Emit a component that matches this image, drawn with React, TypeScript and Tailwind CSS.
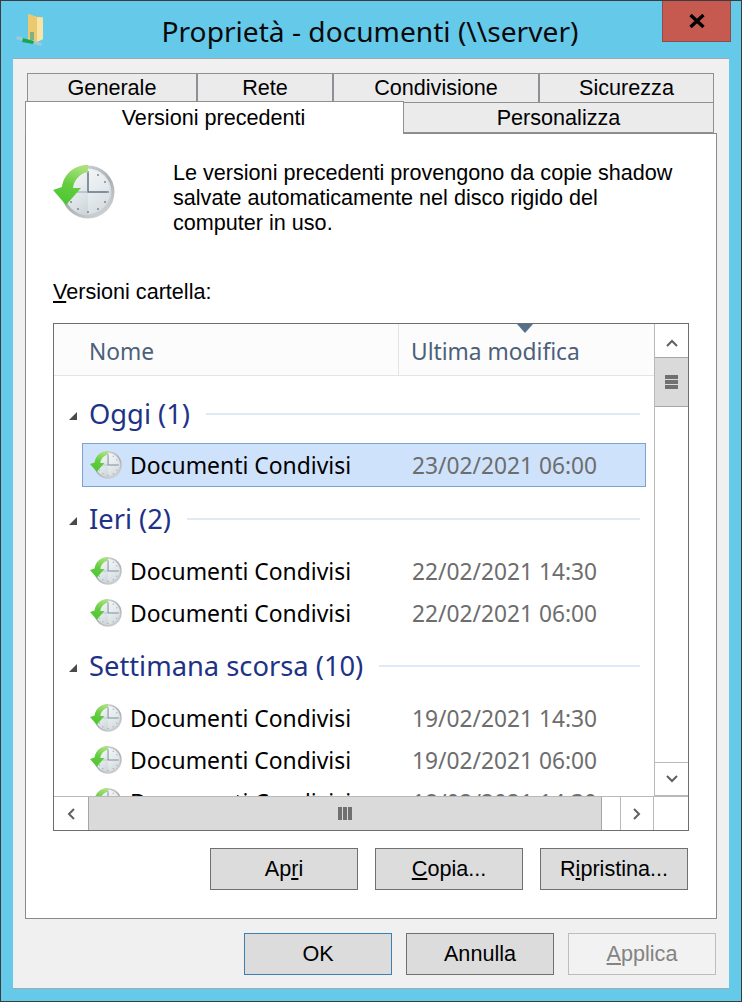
import React from "react";

// Clock with the green "restore" arrow, used big in the intro and small in the rows
function ShadowCopyIcon({ className, id }: { className: string; id: string }) {
  return (
    <svg className={className} viewBox="0 0 62 54" aria-hidden="true">
      <defs>
        <linearGradient id={`${id}-face`} x1="0.2" y1="0.1" x2="0.8" y2="0.9">
          <stop offset="0" stopColor="#f2f5f6" />
          <stop offset="0.55" stopColor="#dce3e6" />
          <stop offset="1" stopColor="#c6ced3" />
        </linearGradient>
        <linearGradient id={`${id}-rim`} x1="0.2" y1="0" x2="0.8" y2="1">
          <stop offset="0" stopColor="#d6d8da" />
          <stop offset="0.5" stopColor="#a9adb1" />
          <stop offset="1" stopColor="#d3d5d7" />
        </linearGradient>
        <linearGradient id={`${id}-arrow`} x1="0.6" y1="0" x2="0.3" y2="1">
          <stop offset="0" stopColor="#a9e07c" />
          <stop offset="0.5" stopColor="#62cd3f" />
          <stop offset="1" stopColor="#4cc52f" />
        </linearGradient>
      </defs>
      <circle cx="35" cy="27" r="26.5" fill={`url(#${id}-rim)`} />
      <circle cx="35" cy="27" r="23.5" fill={`url(#${id}-face)`} />
      <path d="M35 5a22 22 0 0 1 0 44z" fill="#fff" opacity="0.3" />
      {[[35, 7], [45, 10], [52, 17], [55, 27], [52, 37], [45, 44], [35, 47], [25, 44], [18, 37]].map(([x, y]) => (
        <rect key={`${x}-${y}`} x={x - 0.8} y={y - 0.8} width="1.6" height="1.6" fill="#6b7a86" />
      ))}
      <path d="M35 8v19h19" fill="none" stroke="#5d7389" strokeWidth="1.5" />
      <path d="M22 27h13" fill="none" stroke="#9aa7b1" strokeWidth="1" />
      <path d="M35 0C22 0 11 8 9 22L0 25l13 15 15-17h-8c1-8 7-15 15-16z" fill={`url(#${id}-arrow)`} />
    </svg>
  );
}

function FolderNetworkIcon() {
  return (
    <svg className="w-[28px] h-[32px] shrink-0" viewBox="0 0 28 32" aria-hidden="true">
      <path d="M12 0l9 3h6v22l-7 3H12z" fill="#f3d98c" />
      <path d="M12 0l9 3v25l-9-4z" fill="#ecc96f" />
      <path d="M21 3l6 2v20l-6 3z" fill="#f8e5a6" />
      <path d="M1 22l25 7-1 3L0 25z" fill="#a9c9d2" opacity="0.85" />
      <path d="M7 24l11 3-1 3-11-2z" fill="#17a84f" />
      <path d="M14 18h4v8h-4z" fill="#7fb08a" />
    </svg>
  );
}

function Triangle() {
  return (
    <svg className="w-[8px] h-[8px] shrink-0" viewBox="0 0 8 8" aria-hidden="true">
      <path d="M8 0v8H0z" fill="#4a4a4a" />
    </svg>
  );
}

function Chevron({ d }: { d: string }) {
  return (
    <svg className="w-[14px] h-[14px]" viewBox="0 0 14 14" aria-hidden="true">
      <path d={d} fill="none" stroke="#606060" strokeWidth="2" />
    </svg>
  );
}

type Row = { date: string; selected?: boolean };

function GroupHeading({ title }: { title: string }) {
  return (
    <div className="h-[42px] flex items-center pl-[15px] pr-[14px]">
      <div className="w-[20px] pt-[4px]">
        <Triangle />
      </div>
      <span className="text-[27.3px] text-[#1e3287] whitespace-nowrap">{title}</span>
      <div className="flex-1 h-[2px] bg-[#dfeaf7] ml-[16px]" />
    </div>
  );
}

function FileRow({ date, selected, id }: Row & { id: string }) {
  return (
    <div
      className={`h-[42px] mx-[29px] w-[562px] flex items-center pl-[7px] ${
        selected ? "bg-[#cfe2fb] outline outline-1 outline-[#7da2ce]" : ""
      }`}
    >
      <ShadowCopyIcon className="w-[32px] h-[28px] shrink-0" id={id} />
      <span className="ml-[8px] pt-[3px] w-[282px] text-[22.9px] text-black whitespace-nowrap">Documenti Condivisi</span>
      <span className="pt-[3px] text-[22.75px] text-[#6d6d6d] whitespace-nowrap">{date}</span>
    </div>
  );
}

function DialogButton({
  children,
  tone = "normal",
}: {
  children: React.ReactNode;
  tone?: "normal" | "default" | "disabled";
}) {
  const toneClass =
    tone === "disabled"
      ? "bg-[#f2f2f2] border-[#bdbdbd] text-[#838383]"
      : tone === "default"
        ? "bg-[#dcdcdc] border-[#3c7fb1] text-black"
        : "bg-[#dcdcdc] border-[#707070] text-black";
  return (
    <div className={`w-[148px] h-[42px] border flex items-center justify-center text-[21.6px] ${toneClass}`}>
      {children}
    </div>
  );
}

const tabClass = "h-[30px] pt-[1px] bg-[#ebebeb] border border-[#8f8f96] flex items-center justify-center text-[21.6px] text-black";

export default function App() {
  return (
    <div className="w-[742px] h-[1002px] bg-[#65c9ea] border border-[#3c3c3c] flex flex-col overflow-hidden font-['Liberation_Sans',sans-serif]">
      {/* Title bar */}
      <div className="h-[57px] shrink-0 grid grid-cols-[1fr_auto_1fr]">
        <div className="pl-[15px] pt-[13px]">
          <FolderNetworkIcon />
        </div>
        <div className="pt-[10px] pr-[2px] text-[28.15px] leading-[40px] text-[#0a0a0a] font-['Noto_Sans',sans-serif] whitespace-nowrap">
          Proprietà - documenti (\\server)
        </div>
        <div className="flex justify-end pr-[10px]">
          <div className="w-[69px] h-[42px] -mt-px bg-[#c75a50] border border-[#8a4d48] flex items-center justify-center">
            <svg className="w-[16px] h-[14px]" viewBox="0 0 16 14" aria-hidden="true">
              <path d="M1.5 1l13 12M14.5 1l-13 12" fill="none" stroke="#000" strokeWidth="3.4" />
            </svg>
          </div>
        </div>
      </div>

      {/* Dialog panel */}
      <div className="mx-[12px] w-[716px] h-[931px] shrink-0 bg-[#f0f0f0] border-t border-b border-[#a3a8ad] pl-[12px] pt-[14px]">
        <div className="flex pl-[2px]">
          <div className={`${tabClass} w-[170px]`}>Generale</div>
          <div className={`${tabClass} w-[136px]`}>Rete</div>
          <div className={`${tabClass} w-[206px]`}>Condivisione</div>
          <div className={`${tabClass} w-[175px]`}>Sicurezza</div>
        </div>
        <div className="flex">
          <div className="relative z-10 w-[379px] h-[33px] -mt-[2px] -mb-px bg-white border-t border-l border-r border-[#8f8f96] flex items-start justify-center pr-[2px] text-[21.6px] text-black">
            Versioni precedenti
          </div>
          <div className="w-[310px] h-[30px] bg-[#ebebeb] border-r border-b border-[#8f8f96] flex items-center justify-center pt-[2px] text-[21.6px] text-black">
            Personalizza
          </div>
        </div>

        {/* Tab page */}
        <div className="w-[692px] h-[786px] bg-white border border-[#8a8a8a] pl-[27px]">
          <div className="flex pt-[31px]">
            <ShadowCopyIcon className="w-[62px] h-[54px] shrink-0" id="big" />
            <p className="ml-[58px] -mt-[5px] text-[21.6px] leading-[25px] text-black whitespace-nowrap">
              Le versioni precedenti provengono da copie shadow
              <br />
              salvate automaticamente nel disco rigido del
              <br />
              computer in uso.
            </p>
          </div>
          <div className="mt-[44px] text-[21.6px] leading-[25px] text-black">
            <span className="underline">V</span>ersioni cartella:
          </div>

          {/* List view */}
          <div className="mt-[19px] w-[636px] h-[508px] border border-[#6e6e6e] flex flex-col font-['Noto_Sans',sans-serif]">
            <div className="flex flex-1 min-h-0">
              <div className="w-[600px] shrink-0 flex flex-col">
                <div className="relative h-[52px] shrink-0 bg-[#fcfcfc] border-b border-[#e4e4e4] flex text-[22.75px] text-[#4c607a]">
                  <div className="w-[345px] border-r border-[#e4e4e4] pl-[35px] pt-[6px] flex items-center">Nome</div>
                  <div className="flex-1 pl-[12px] pt-[6px] flex items-center">Ultima modifica</div>
                  <svg className="absolute left-[463px] top-0 w-[16px] h-[9px]" viewBox="0 0 16 9" aria-hidden="true">
                    <path d="M0 0h16L8 9z" fill="#56708c" />
                  </svg>
                </div>
                <div className="flex-1 min-h-0 overflow-hidden pt-[17px]">
                  <GroupHeading title="Oggi (1)" />
                  <div className="pt-[9px] pb-[12px]">
                    <FileRow id="r1" date="23/02/2021 06:00" selected />
                  </div>
                  <GroupHeading title="Ieri (2)" />
                  <div className="pt-[10px] pb-[11px]">
                    <FileRow id="r2" date="22/02/2021 14:30" />
                    <FileRow id="r3" date="22/02/2021 06:00" />
                  </div>
                  <GroupHeading title="Settimana scorsa (10)" />
                  <div className="pt-[10px]">
                    <FileRow id="r4" date="19/02/2021 14:30" />
                    <FileRow id="r5" date="19/02/2021 06:00" />
                    <FileRow id="r6" date="18/02/2021 14:30" />
                  </div>
                </div>
              </div>

              {/* Vertical scrollbar */}
              <div className="w-[34px] shrink-0 border-l border-[#b9b9b9] flex flex-col bg-white">
                <div className="h-[33px] shrink-0 pt-[4px] flex items-center justify-center">
                  <Chevron d="M2 10l5-5 5 5" />
                </div>
                <div className="h-[50px] shrink-0 bg-[#dadada] border-t border-b border-[#a6a6a6] flex flex-col items-center justify-center gap-[1px]">
                  <div className="w-[13px] h-[4px] bg-[#707070]" />
                  <div className="w-[13px] h-[4px] bg-[#707070]" />
                  <div className="w-[13px] h-[4px] bg-[#707070]" />
                </div>
                <div className="flex-1" />
                <div className="h-[34px] shrink-0 border-t border-b border-[#b9b9b9] flex items-center justify-center">
                  <Chevron d="M2 4l5 5 5-5" />
                </div>
              </div>
            </div>

            {/* Horizontal scrollbar */}
            <div className="h-[34px] shrink-0 flex bg-white border-t border-[#b9b9b9]">
              <div className="w-[34px] shrink-0 flex items-center justify-center">
                <Chevron d="M10 2L5 7l5 5" />
              </div>
              <div className="w-[514px] shrink-0 bg-[#dadada] border-l border-r border-[#a6a6a6] flex items-center justify-center gap-[1px]">
                <div className="w-[4px] h-[13px] bg-[#707070]" />
                <div className="w-[4px] h-[13px] bg-[#707070]" />
                <div className="w-[4px] h-[13px] bg-[#707070]" />
              </div>
              <div className="w-[18px] shrink-0" />
              <div className="w-[34px] shrink-0 border-l border-r border-[#b9b9b9] flex items-center justify-center">
                <Chevron d="M4 2l5 5-5 5" />
              </div>
            </div>
          </div>

          <div className="mt-[17px] w-[635px] flex justify-end gap-[17px]">
            <DialogButton>
              Ap<span className="underline">r</span>i
            </DialogButton>
            <DialogButton>
              <span className="underline">C</span>opia...
            </DialogButton>
            <DialogButton>
              R<span className="underline">i</span>pristina...
            </DialogButton>
          </div>
        </div>

        <div className="mt-[14px] w-[692px] pr-[1px] flex justify-end gap-[14px]">
          <DialogButton tone="default">OK</DialogButton>
          <DialogButton>Annulla</DialogButton>
          <DialogButton tone="disabled">
            <span className="underline">A</span>pplica
          </DialogButton>
        </div>
      </div>
    </div>
  );
}
